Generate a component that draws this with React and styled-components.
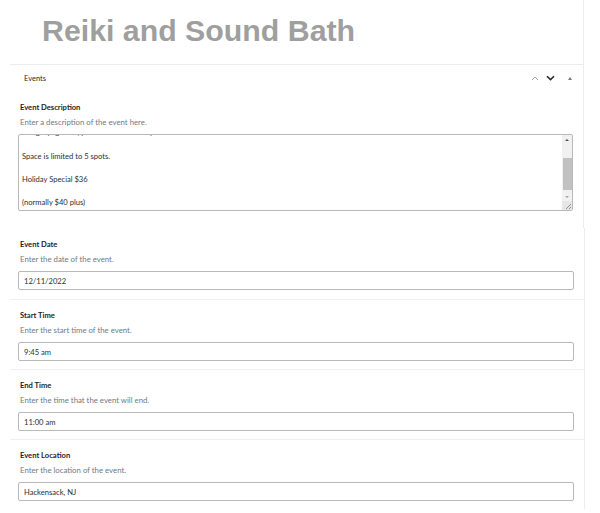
import React from 'react';
import styled, { createGlobalStyle } from 'styled-components';

const GlobalStyle = createGlobalStyle`
  body {
    margin: 0;
    background: #ffffff;
    font-family: Lato, "Open Sans", sans-serif;
  }
`;

const Page = styled.div`
  width: 600px;
  height: 513px;
  overflow: hidden;
  background: #fff;
`;

const Panel = styled.div`
  width: ${(p) => p.width}px;
  border-right: 1px solid #ededed;
  box-sizing: border-box;
  padding-bottom: ${(p) => p.bottom || 0}px;
`;

const TitleBar = styled.div`
  margin-left: 10px;
  height: 65px;
  padding: 13px 0 0 32px;
  box-sizing: border-box;
  border-bottom: 1px solid #ececec;
`;

const Title = styled.h1`
  margin: 0;
  font-family: "Liberation Sans", Arial, sans-serif;
  font-size: 30.3px;
  line-height: 36px;
  font-weight: 700;
  color: #9f9f9f;
`;

const PanelHeader = styled.div`
  margin-left: 10px;
  height: 26px;
  padding: 0 11px 0 14px;
  display: flex;
  align-items: center;
  justify-content: space-between;
  font-size: 7.5px;
  color: #2a2a2a;
`;

const HeaderTools = styled.div`
  display: flex;
  align-items: center;
  gap: 7px;
`;

const Toggle = styled.span`
  width: 0;
  height: 0;
  margin-left: 6px;
  border-left: 2.5px solid transparent;
  border-right: 2.5px solid transparent;
  border-bottom: 3.5px solid #777;
`;

const Field = styled.div`
  margin-left: 10px;
  padding: 9px 10px ${(p) => (p.tight ? 8 : 9)}px 8px;
  border-top: 1px solid ${(p) => (p.divided ? '#f0f0f0' : 'transparent')};
`;

const Label = styled.div`
  margin-left: 2px;
  font-size: 7.6px;
  line-height: 12px;
  font-weight: 700;
  color: #1e1e1e;
`;

const Help = styled.div`
  margin: 3px 0 6px 2px;
  font-size: 7.8px;
  line-height: 12px;
  color: #707985;
`;

const Input = styled.div`
  height: 19px;
  box-sizing: border-box;
  border: 1px solid #b9b9b9;
  border-radius: 2px;
  padding-left: 5px;
  display: flex;
  align-items: center;
  font-size: 7.6px;
  color: #2a2f33;
`;

const TextBox = styled.div`
  height: 77px;
  box-sizing: border-box;
  border: 1px solid #b9b9b9;
  border-radius: 2px;
  display: flex;
  overflow: hidden;
`;

const TextContent = styled.div`
  flex: 1;
  overflow: hidden;
  padding-left: 3px;
  font-size: 7.6px;
  color: #2a2f33;
`;

const TextInner = styled.div`
  margin-top: -8.5px;
`;

const Para = styled.p`
  margin: 0 0 ${(p) => (p.first ? 13 : 11.5)}px;
  line-height: 11.5px;
`;

const ScrollTrack = styled.div`
  width: 10px;
  background: #f1f1f1;
  display: flex;
  flex-direction: column;
  align-items: center;
`;

const Arrow = styled.div`
  height: 9px;
  display: flex;
  align-items: center;
  justify-content: center;
  &::after {
    content: '';
    border-left: 2px solid transparent;
    border-right: 2px solid transparent;
    ${(p) => (p.down ? 'border-top: 2.5px solid #a3a3a3;' : 'border-bottom: 2.5px solid #505050;')}
  }
`;

const Thumb = styled.div`
  width: 9px;
  height: 32px;
  margin-top: 14px;
  background: #c1c1c1;
`;

const Spacer = styled.div`
  flex: 1;
`;

const Grip = styled.div`
  width: 10px;
  height: 9px;
  background: #e6e6e6;
  display: flex;
  align-items: flex-end;
  justify-content: flex-end;
`;

const ChevronUp = () => (
  <svg width="8" height="6" viewBox="0 0 8 6">
    <path d="M1 5 L4 2 L7 5" fill="none" stroke="#a8a8a8" strokeWidth="1" />
  </svg>
);

const ChevronDown = () => (
  <svg width="9" height="6" viewBox="0 0 9 6">
    <path d="M1 1.2 L4.5 4.6 L8 1.2" fill="none" stroke="#2a2a2a" strokeWidth="1.6" />
  </svg>
);

const GripLines = () => (
  <svg width="8" height="8" viewBox="0 0 8 8">
    <path d="M7 2 L2 7 M7 5 L5 7" stroke="#777" strokeWidth="0.8" />
  </svg>
);

const fields = [
  { label: 'Event Date', help: 'Enter the date of the event.', value: '12/11/2022' },
  { label: 'Start Time', help: 'Enter the start time of the event.', value: '9:45 am' },
  { label: 'End Time', help: 'Enter the time that the event will end.', value: '11:00 am' },
  { label: 'Event Location', help: 'Enter the location of the event.', value: 'Hackensack, NJ' },
];

const App = () => (
  <Page>
    <GlobalStyle />
    <Panel width={584} bottom={8}>
      <TitleBar>
        <Title>Reiki and Sound Bath</Title>
      </TitleBar>
      <PanelHeader>
        <span>Events</span>
        <HeaderTools>
          <ChevronUp />
          <ChevronDown />
          <Toggle />
        </HeaderTools>
      </PanelHeader>
      <Field>
        <Label>Event Description</Label>
        <Help>Enter a description of the event here.</Help>
        <TextBox>
          <TextContent>
            <TextInner>
              <Para first>Bring a yoga mat, pillow and blanket if you have one.</Para>
              <Para>Space is limited to 5 spots.</Para>
              <Para>Holiday Special $36</Para>
              <Para>(normally $40 plus)</Para>
            </TextInner>
          </TextContent>
          <ScrollTrack>
            <Arrow />
            <Thumb />
            <Spacer />
            <Arrow down />
            <Grip>
              <GripLines />
            </Grip>
          </ScrollTrack>
        </TextBox>
      </Field>
    </Panel>
    <Panel width={585}>
      {fields.map((f, i) => (
        <Field key={f.label} divided={i > 0} tight={i > 0}>
          <Label>{f.label}</Label>
          <Help>{f.help}</Help>
          <Input>{f.value}</Input>
        </Field>
      ))}
    </Panel>
  </Page>
);

export default App;
